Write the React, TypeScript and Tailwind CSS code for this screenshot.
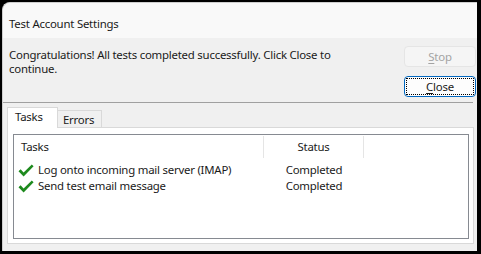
const font = { fontFamily: '"Noto Sans", "Open Sans", sans-serif' };

function Check() {
  return (
    <svg width="16" height="13" viewBox="0 0 16 13" className="shrink-0">
      <path d="M0.5 7.2 L2.6 5.3 L5.6 8.6 L13.8 0.6 L15.6 2.3 L5.6 12.4 Z" fill="#1e8a1e" />
    </svg>
  );
}

const rows = [
  { task: "Log onto incoming mail server (IMAP)", status: "Completed" },
  { task: "Send test email message", status: "Completed" },
];

export default function App() {
  return (
    <div className="w-[481px] h-[254px] bg-black pl-[2px] pt-[2px] pr-[4px] pb-[3px]" style={font}>
      <div className="h-full flex flex-col bg-[#f0f0f0] rounded-tl-[8px] overflow-hidden border-t border-l border-[#cfcfcf] text-[11.4px] tracking-[-0.22px] text-[#1a1a1a]">
        <div className="h-[35px] shrink-0 bg-[#f9f9f9] pl-[6px] pt-[13px] leading-[16px]">Test Account Settings</div>

        <div className="h-[64px] shrink-0 flex justify-between pl-[6px] pr-[1px]">
          <p className="mt-[10px] leading-[14px] whitespace-nowrap">
            Congratulations! All tests completed successfully. Click Close to
            <br />
            continue.
          </p>
          <div className="flex flex-col gap-[9px] pt-[8px]">
            <div className="w-[72px] h-[21px] flex items-center justify-center rounded-[4px] border border-[#e5e5e5] bg-[#f5f5f5] text-[#a3a3a3] leading-[14px]">
              <span><span className="underline underline-offset-2">S</span>top</span>
            </div>
            <div className="w-[72px] h-[21px] rounded-[4px] border border-[#0067c0] bg-[#fdfdfd] p-[1px]">
              <div className="h-full flex items-center justify-center border border-dotted border-black leading-[14px]">
                <span><span className="underline underline-offset-2">C</span>lose</span>
              </div>
            </div>
          </div>
        </div>

        <div className="h-px bg-[#a0a0a0] mr-[4px] shrink-0" />

        <div className="flex-1 flex flex-col pl-[4px] pr-[3px] pt-[4px] pb-[7px]">
          <div className="flex items-end h-[21px] leading-[16px]">
            <div className="relative z-10 w-[51px] h-[21px] bg-white border border-b-0 border-[#d9d9d9] pl-[7px] pt-[1px]">Tasks</div>
            <div className="w-[44px] h-[18px] bg-[#f0f0f0] border border-l-0 border-b-0 border-[#d9d9d9] pl-[5px] pt-[1px]">Errors</div>
          </div>
          <div className="-mt-px flex-1 bg-white border border-[#d9d9d9] pl-[5px] pr-[4px] pt-[6px] pb-[4px] flex">
            <div className="flex-1 border border-[#868a91]">
              <div className="flex h-[24px] items-stretch">
                <div className="w-[250px] flex items-center pl-[7px] border-r border-[#e5e5e5] my-px">Tasks</div>
                <div className="w-[100px] flex items-center justify-center border-r border-[#e5e5e5] my-px">Status</div>
              </div>
              <div className="mt-[3px] flex flex-col">
                {rows.map((r) => (
                  <div key={r.task} className="flex h-[16px] items-center">
                    <div className="w-[250px] flex items-center gap-[4px] pl-[4px]">
                      <Check />
                      <span>{r.task}</span>
                    </div>
                    <div className="w-[100px] text-center">{r.status}</div>
                  </div>
                ))}
              </div>
            </div>
          </div>
        </div>
      </div>
    </div>
  );
}
